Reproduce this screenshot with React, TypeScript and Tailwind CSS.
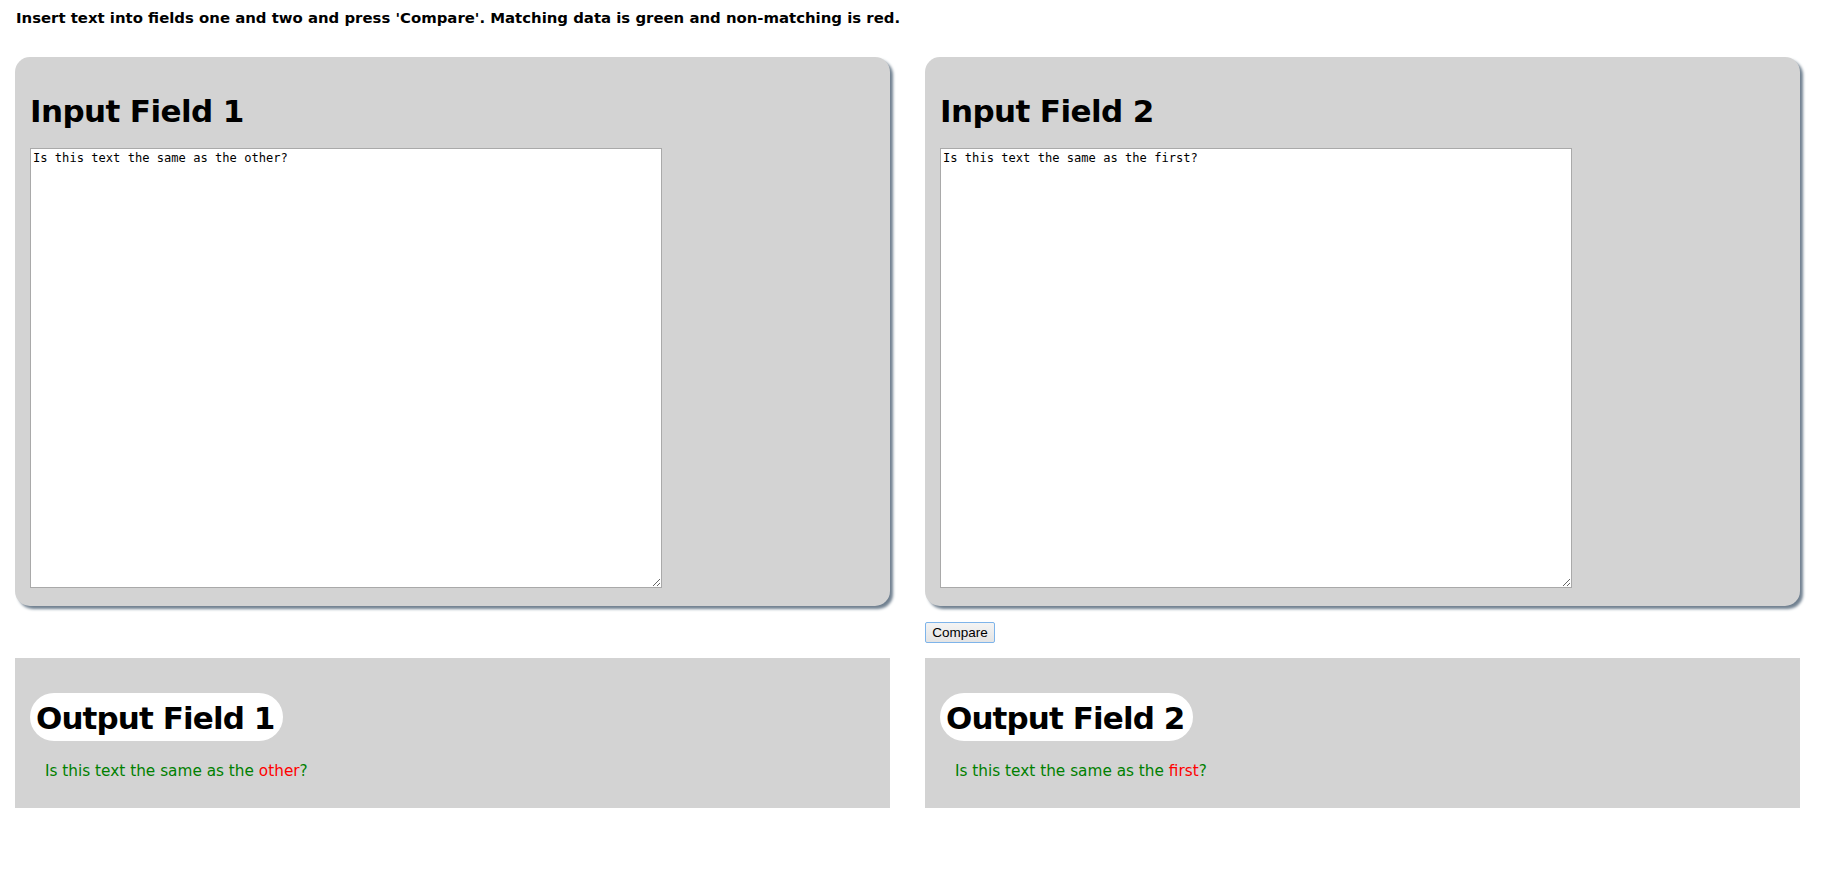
import React from "react";

const verdana = { fontFamily: '"DejaVu Sans", Verdana, sans-serif' };

function InputPanel({ title, text }: { title: string; text: string }) {
  return (
    <div className="w-[875px] h-[549px] bg-[#d3d3d3] rounded-[15px] shadow-[3px_3px_3px_#708090] px-[15px] pt-[35px]">
      <h1
        className="text-[31px] leading-[39px] tracking-[-0.6px] font-bold text-black m-0"
        style={verdana}
      >
        {title}
      </h1>
      <textarea
        defaultValue={text}
        className="block mt-[17px] w-[632px] h-[440px] bg-white border border-[#a9a9a9] p-[2px] text-[12.1px] leading-[14px] text-black outline-none"
        style={{ fontFamily: '"DejaVu Sans Mono", "Liberation Mono", monospace' }}
      />
    </div>
  );
}

function OutputPanel({ title, same, diff }: { title: string; same: string; diff: string }) {
  return (
    <div className="w-[875px] h-[150px] bg-[#d3d3d3] px-[15px] pt-[35px]">
      <div className="flex">
        <h1
          className="h-[48px] bg-white rounded-full pl-[6px] pr-[8px] pt-[6px] text-[31px] leading-[39px] tracking-[-0.9px] font-bold text-black m-0"
          style={verdana}
        >
          {title}
        </h1>
      </div>
      <p
        className="mt-[21px] pl-[15px] text-[15.3px] leading-[18px] text-[#008000]"
        style={verdana}
      >
        {same}
        <span className="text-[#ff0000]">{diff}</span>?
      </p>
    </div>
  );
}

export default function App() {
  return (
    <div className="w-[1822px] h-[880px] bg-white pl-[15px]">
      <div className="h-[57px] pt-[9px]">
        <p
          className="text-[14.9px] leading-[18px] font-bold text-black pl-[1px]"
          style={verdana}
        >
          Insert text into fields one and two and press 'Compare'. Matching data is green and non-matching is red.
        </p>
      </div>
      <div className="flex gap-[35px]">
        <InputPanel title="Input Field 1" text="Is this text the same as the other?" />
        <InputPanel title="Input Field 2" text="Is this text the same as the first?" />
      </div>
      <div className="flex pt-[16px] pb-[15px]">
        <div className="w-[910px]" />
        <button
          className="h-[21px] w-[70px] bg-gradient-to-b from-[#f4f4f4] to-[#e4e4e4] border border-[#7eb4ea] rounded-[2px] text-[13.5px] leading-[19px] text-black"
          style={{ fontFamily: '"Liberation Sans", Arial, sans-serif' }}
        >
          Compare
        </button>
      </div>
      <div className="flex gap-[35px]">
        <OutputPanel title="Output Field 1" same="Is this text the same as the " diff="other" />
        <OutputPanel title="Output Field 2" same="Is this text the same as the " diff="first" />
      </div>
    </div>
  );
}
